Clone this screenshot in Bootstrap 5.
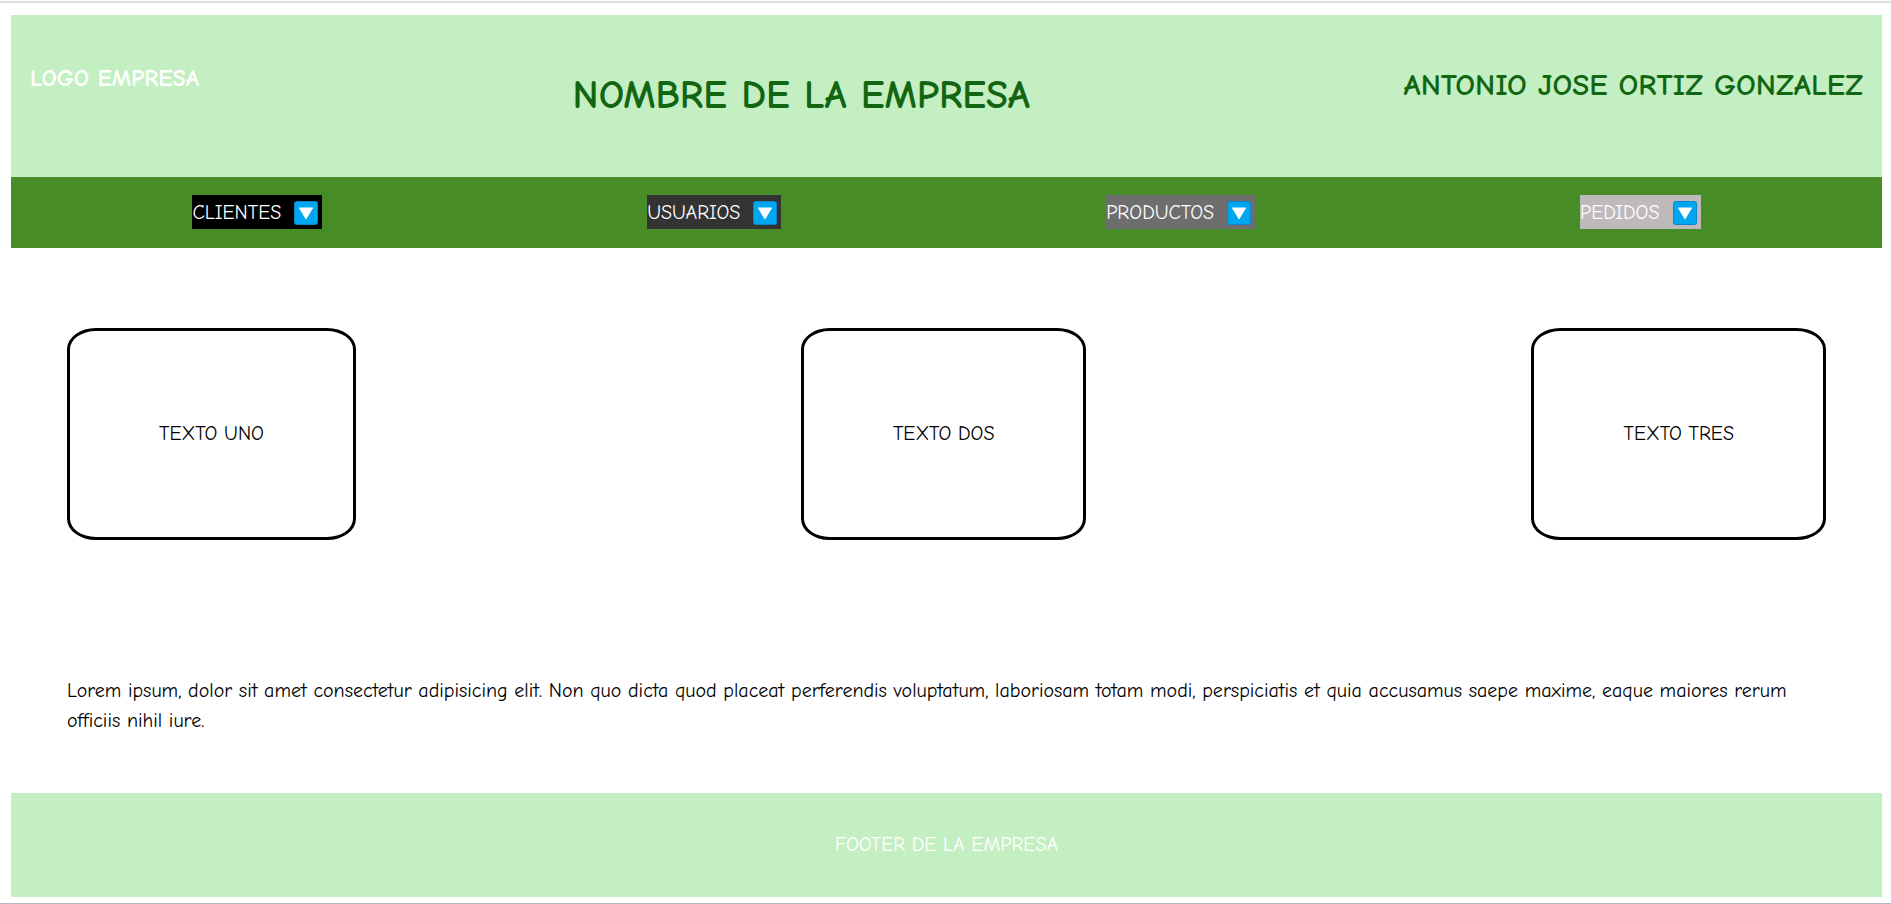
<!DOCTYPE html>
<html lang="es">
<head>
<meta charset="utf-8">
<meta name="viewport" content="width=device-width, initial-scale=1">
<title>Nombre de la empresa</title>
<link href="https://cdn.jsdelivr.net/npm/bootstrap@5.3.0/dist/css/bootstrap.min.css" rel="stylesheet">
<style>
  body {
    font-family: "Comic Neue", "Liberation Sans", sans-serif;
    font-size: 20px;
    line-height: 30px;
    color: #000;
    background: #fff;
  }
  .page-frame {
    margin-top: 1px;
    border-top: 2px solid #dcdddc;
    border-bottom: 1px solid #b5b5bf;
    padding: 12px 9px 6px 11px;
  }
  .bg-mint { background: #c4efc3; }
  .site-header {
    min-height: 162px;
    padding: 38px 19px;
  }
  .site-header > * {
    font-weight: 700;
    line-height: 2.1;
    margin: 0;
  }
  .brand { font-size: 24px; color: #fff; }
  .company { font-size: 40px; color: #126612; }
  .owner { font-size: 31px; color: #126612; }
  .site-nav {
    background: #488c28;
    padding: 18px 19px 19px;
  }
  .menu-btn {
    border: 0;
    color: #fff;
    height: 34px;
    line-height: 34px;
    padding: 2px 4px 0 0;
    gap: 13px;
  }
  .menu-btn svg { width: 24px; height: 24px; }
  .tone-1 { background: #000; }
  .tone-2 { background: #333; }
  .tone-3 { background: #6e6e6e; }
  .tone-4 { background: #bebaba; }
  .content { padding: 80px 56px 57px; }
  .text-box {
    border: 3px solid #000;
    border-radius: 10%;
    padding: 88px 89px;
  }
  .intro { margin: 136px 0 0; }
  .site-footer { padding: 37px 19px; color: #fff; }
</style>
</head>
<body>
<svg class="d-none" aria-hidden="true">
  <symbol id="down" viewBox="0 0 24 24">
    <rect width="24" height="24" rx="3" fill="#0b86c9"/>
    <rect x="1" y="1" width="22" height="22" rx="2" fill="#00a6f0"/>
    <path d="M5.500 6.500h13q.8 0 .4.8l-6.300 10.500q-.6.8-1.200 0L5.100 7.300q-.4-.8.4-.8z" fill="#fff"/>
  </symbol>
</svg>
<div class="page-frame">
  <header class="site-header bg-mint d-flex flex-wrap justify-content-between align-items-start">
    <h3 class="brand">LOGO EMPRESA</h3>
    <h1 class="company">NOMBRE DE LA EMPRESA</h1>
    <h2 class="owner">ANTONIO JOSE ORTIZ GONZALEZ</h2>
  </header>
  <nav class="site-nav d-flex flex-wrap justify-content-around">
    <button type="button" class="menu-btn tone-1 d-flex align-items-center">CLIENTES <svg aria-hidden="true"><use href="#down"/></svg></button>
    <button type="button" class="menu-btn tone-2 d-flex align-items-center">USUARIOS <svg aria-hidden="true"><use href="#down"/></svg></button>
    <button type="button" class="menu-btn tone-3 d-flex align-items-center">PRODUCTOS <svg aria-hidden="true"><use href="#down"/></svg></button>
    <button type="button" class="menu-btn tone-4 d-flex align-items-center">PEDIDOS <svg aria-hidden="true"><use href="#down"/></svg></button>
  </nav>
  <main class="content">
    <div class="d-flex flex-wrap justify-content-between">
      <div class="text-box">TEXTO UNO</div>
      <div class="text-box">TEXTO DOS</div>
      <div class="text-box">TEXTO TRES</div>
    </div>
    <p class="intro">Lorem ipsum, dolor sit amet consectetur adipisicing elit. Non quo dicta quod placeat perferendis voluptatum, laboriosam totam modi, perspiciatis et quia accusamus saepe maxime, eaque maiores rerum officiis nihil iure.</p>
  </main>
  <footer class="site-footer bg-mint text-center">FOOTER DE LA EMPRESA</footer>
</div>
<script src="https://cdn.jsdelivr.net/npm/bootstrap@5.3.0/dist/js/bootstrap.bundle.min.js"></script>
</body>
</html>
